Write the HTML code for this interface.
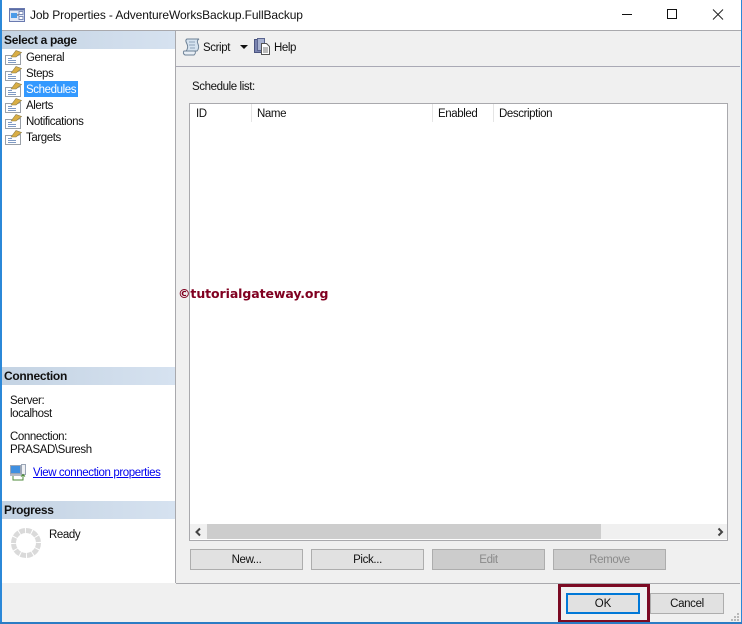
<!DOCTYPE html>
<html><head><meta charset="utf-8"><style>
html,body{margin:0;padding:0;}
body{width:742px;height:624px;position:relative;overflow:hidden;background:#f0f0f0;font-family:"Liberation Sans",sans-serif;font-size:11.5px;color:#000;}
.a{position:absolute;}
.t{position:absolute;white-space:nowrap;line-height:16px;height:16px;margin-top:1px;letter-spacing:-.4px;color:#111;}
.hd{position:absolute;left:2px;width:173px;height:18px;background:linear-gradient(90deg,#c4d3e3,#d6e2f0);font-size:12px;font-weight:bold;line-height:18px;text-indent:2px;color:#111;letter-spacing:-.3px;}
.btn{position:absolute;top:549px;width:111px;height:19px;border:1px solid #adadad;background:#e1e1e1;text-align:center;line-height:21px;letter-spacing:-.35px;color:#111;}
.dis{background:#ccc;color:#8a8a8a;}
svg{position:absolute;overflow:visible;}
</style></head><body>
<!-- title bar -->
<div class="a" style="left:0;top:0;width:742px;height:30px;background:#fff"></div>
<svg style="left:9px;top:8px" width="17" height="14" viewBox="0 0 17 14"><rect x=".5" y=".5" width="15" height="13" fill="#dfe6f5" stroke="#6a7ab0"/><rect x="1" y="1" width="14" height="1.500" fill="#5a6ca4"/><rect x="2" y="5" width="6" height="5" fill="#4a9ae8"/><rect x="10" y="3.500" width="4" height="3" fill="#fff" stroke="#7a8ab5"/><rect x="10" y="8.500" width="4" height="3" fill="#fff" stroke="#7a8ab5"/><path d="M8 7h2" stroke="#556" /></svg>
<div class="t" style="left:30px;top:7px;margin-top:0;font-size:12px;letter-spacing:-.12px;">Job Properties - AdventureWorksBackup.FullBackup</div>
<svg style="left:620px;top:8px" width="110" height="16" viewBox="0 0 110 16"><path d="M2 6.500h10" stroke="#111" stroke-width="1"/><rect x="47.500" y="1.500" width="9" height="9" fill="none" stroke="#111" stroke-width="1"/><path d="M93 1.500l10 10M103 1.500l-10 10" stroke="#222" stroke-width="1"/></svg>
<div class="a" style="left:0;top:30px;width:742px;height:1px;background:#a9a9ad"></div>

<!-- left panel -->
<div class="a" style="left:2px;top:31px;width:173px;height:552px;background:#fff"></div>
<div class="a" style="left:175px;top:31px;width:1px;height:552px;background:#a9a9ad"></div>
<div class="hd" style="top:31px;">Select a page</div>

<svg style="left:0;top:0;width:0;height:0"><defs>
<g id="pg"><path d="M.5 5.500h12l3 -1v10H.5z" fill="#fff" stroke="#9aa0a8"/><path d="M3 8.500h4M3 10.500h8M3 12.500h8" stroke="#7f9ac4"/><path d="M6 7L11 .5l5.500 2L11 7z" fill="#d9ae45" stroke="#8a7a45" stroke-width=".6"/></g>
</defs></svg>
<svg style="left:5px;top:50px" width="17" height="15"><use href="#pg"/></svg>
<svg style="left:5px;top:66px" width="17" height="15"><use href="#pg"/></svg>
<svg style="left:5px;top:82px" width="17" height="15"><use href="#pg"/></svg>
<svg style="left:5px;top:98px" width="17" height="15"><use href="#pg"/></svg>
<svg style="left:5px;top:114px" width="17" height="15"><use href="#pg"/></svg>
<svg style="left:5px;top:130px" width="17" height="15"><use href="#pg"/></svg>
<div class="a" style="left:24px;top:81px;width:54px;height:16px;background:#3399ff"></div>
<div class="t" style="left:26px;top:49px">General</div>
<div class="t" style="left:26px;top:65px">Steps</div>
<div class="t" style="left:26px;top:81px;color:#fff">Schedules</div>
<div class="t" style="left:26px;top:97px">Alerts</div>
<div class="t" style="left:26px;top:113px">Notifications</div>
<div class="t" style="left:26px;top:129px">Targets</div>

<div class="hd" style="top:367px;">Connection</div>
<div class="t" style="left:10px;top:392px">Server:</div>
<div class="t" style="left:10px;top:405px">localhost</div>
<div class="t" style="left:10px;top:428px">Connection:</div>
<div class="t" style="left:10px;top:441px">PRASAD\Suresh</div>
<svg style="left:10px;top:464px" width="17" height="17" viewBox="0 0 17 17"><rect x=".5" y="1.500" width="10" height="8" fill="#3f8fe0" stroke="#9aa5b5"/><rect x="0" y="10" width="11" height="2" fill="#b5b9c5"/><rect x="11.500" y=".5" width="4" height="10" fill="#eef0f4" stroke="#9aa5b5"/><path d="M3 12v4h10v-5" fill="none" stroke="#4e8a3a"/><path d="M11 12.500l2-2 2 2" fill="none" stroke="#4e8a3a"/></svg>
<div class="t" style="left:33px;top:464px;color:#0000ee;text-decoration:underline;">View connection properties</div>

<div class="hd" style="top:501px;">Progress</div>
<svg style="left:11px;top:528px" width="30" height="30" viewBox="0 0 30 30"><circle cx="15" cy="15" r="12.500" fill="none" stroke="#dadada" stroke-width="5" stroke-dasharray="5.500 1"/></svg>
<div class="t" style="left:49px;top:526px">Ready</div>

<!-- toolbar -->
<div class="a" style="left:176px;top:66px;width:564px;height:1px;background:#a9a9b5"></div>
<svg style="left:183px;top:38px" width="18" height="18" viewBox="0 0 18 18"><path d="M4 1h12c-2 1-2 3-1 5s1 5-1 7H3c2-2 2-5 1-7S2 2 4 1z" fill="#d5e2ef" stroke="#6d8196"/><path d="M1 13h11c1 2 0 3-1 4H2c-2-1-2-3-1-4z" fill="#e8eef5" stroke="#6d8196"/><path d="M6 4h6M6 7h6M7 10h5" stroke="#8da3b8"/></svg>
<div class="t" style="left:203px;top:39px">Script</div>
<svg style="left:240px;top:45px" width="8" height="4"><path d="M0 0h8L4 4z" fill="#111"/></svg>
<svg style="left:254px;top:38px" width="17" height="17" viewBox="0 0 17 17"><rect x=".5" y="1.500" width="9" height="13" fill="#7a84b0" stroke="#4a5480"/><rect x="3.500" y=".5" width="7" height="12" fill="#a8b2d0" stroke="#5a6490"/><path d="M7.500 5.500h5l3 3v8h-8z" fill="#fff" stroke="#555"/><path d="M9 10h5M9 12h5M9 14h5" stroke="#777"/></svg>
<div class="t" style="left:274px;top:39px">Help</div>

<div class="t" style="left:192px;top:78px">Schedule list:</div>

<!-- list -->
<div class="a" style="left:189px;top:103px;width:537px;height:436px;background:#fff;border:1px solid #a9a9ad"></div>
<div class="a" style="left:251px;top:104px;width:1px;height:18px;background:#e5e5e5"></div>
<div class="a" style="left:432px;top:104px;width:1px;height:18px;background:#e5e5e5"></div>
<div class="a" style="left:493px;top:104px;width:1px;height:18px;background:#e5e5e5"></div>
<div class="t" style="left:196px;top:105px">ID</div>
<div class="t" style="left:257px;top:105px">Name</div>
<div class="t" style="left:438px;top:105px">Enabled</div>
<div class="t" style="left:499px;top:105px">Description</div>
<!-- scrollbar -->
<div class="a" style="left:190px;top:524px;width:537px;height:15px;background:#f0f0f0"></div>
<div class="a" style="left:207px;top:524px;width:394px;height:15px;background:#cdcdcd"></div>
<svg style="left:195px;top:528px" width="7" height="8"><path d="M5 .5L1.500 4 5 7.500" fill="none" stroke="#444" stroke-width="2"/></svg>
<svg style="left:717px;top:528px" width="7" height="8"><path d="M1.500 .5L5 4 1.500 7.500" fill="none" stroke="#444" stroke-width="2"/></svg>

<!-- buttons -->
<div class="btn" style="left:190px">New...</div>
<div class="btn" style="left:311px">Pick...</div>
<div class="btn dis" style="left:432px">Edit</div>
<div class="btn dis" style="left:553px">Remove</div>

<div class="t" style="left:178px;top:286px;margin-top:0;height:16px;font-family:'DejaVu Sans',sans-serif;font-weight:bold;font-size:12.500px;letter-spacing:-.08px;color:#800020;">©tutorialgateway.org</div>

<!-- footer -->
<div class="a" style="left:176px;top:583px;width:564px;height:1px;background:#a9a9ad"></div>
<div class="a" style="left:558px;top:584px;width:86px;height:33px;border:3px solid #7b0a23;"></div>
<div class="a" style="left:566px;top:593px;width:70px;height:17px;border:2px solid #0078d7;background:#e1e1e1;text-align:center;line-height:19px;color:#111">OK</div>
<div class="a" style="left:650px;top:593px;width:72px;height:19px;border:1px solid #adadad;background:#e1e1e1;text-align:center;line-height:21px;color:#111;letter-spacing:-.35px">Cancel</div>
<svg style="left:731px;top:613px" width="9" height="9"><path d="M6 0h2v2H6zM3 3h2v2H3zM6 3h2v2H6zM0 6h2v2H0zM3 6h2v2H3zM6 6h2v2H6z" fill="#b8b8b8"/></svg>

<!-- window borders -->
<div class="a" style="left:0;top:0;width:2px;height:624px;background:#2b88d8"></div>
<div class="a" style="left:741px;top:0;width:1px;height:624px;background:#2b88d8"></div>
<div class="a" style="left:0;top:622px;width:742px;height:2px;background:#2b7cc4"></div>
</body></html>
